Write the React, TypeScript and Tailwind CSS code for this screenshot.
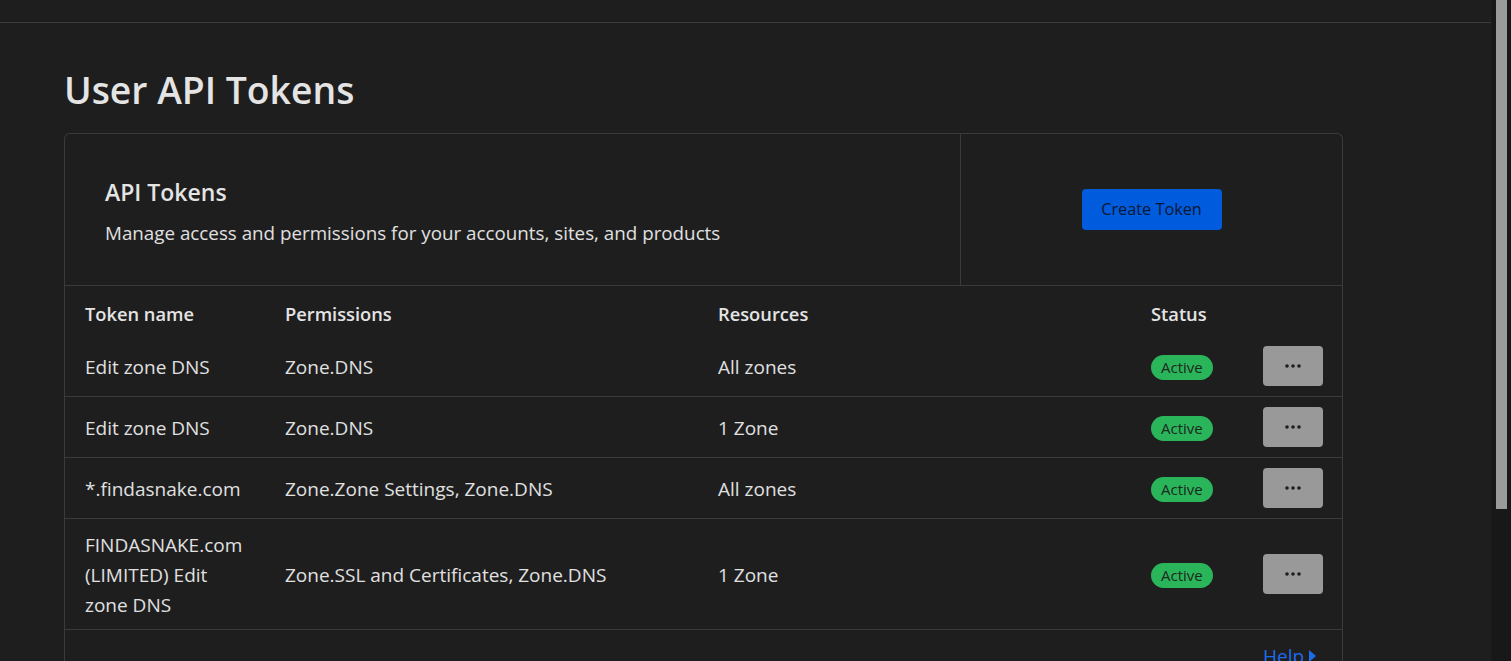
import React from "react";

const rows = [
  { name: "Edit zone DNS", perms: "Zone.DNS", res: "All zones" },
  { name: "Edit zone DNS", perms: "Zone.DNS", res: "1 Zone" },
  { name: "*.findasnake.com", perms: "Zone.Zone Settings, Zone.DNS", res: "All zones" },
  { name: "FINDASNAKE.com (LIMITED) Edit zone DNS", perms: "Zone.SSL and Certificates, Zone.DNS", res: "1 Zone" },
];

function Dots() {
  return (
    <svg width="16" height="4" viewBox="0 0 16 4" fill="#1e1e1e">
      <circle cx="2" cy="2" r="1.8" />
      <circle cx="8" cy="2" r="1.8" />
      <circle cx="14" cy="2" r="1.8" />
    </svg>
  );
}

export default function App() {
  return (
    <div
      className="flex h-[661px] w-[1511px] overflow-hidden bg-[#1e1e1e] text-[#e0e0e0]"
      style={{ fontFamily: '"Open Sans", "Noto Sans", sans-serif' }}
    >
      <div className="flex-1 flex flex-col">
        <div className="h-[23px] shrink-0 border-b border-[#3a3a3a]" />
        <div className="pl-[64px] pr-[148px]">
          <h1 className="mt-[42px] text-[37.3px] leading-[50px] font-semibold text-[#e4e4e4]">User API Tokens</h1>
          <div className="mt-[18px] rounded-t-[6px] border border-b-0 border-[#3a3a3a]">
            <div className="flex h-[152px] border-b border-[#3a3a3a]">
              <div className="flex-1 flex flex-col pl-[40px] pt-[43px]">
                <div className="text-[23px] leading-[30px] font-semibold text-[#e4e4e4]">API Tokens</div>
                <div className="mt-[13px] text-[18.8px] leading-[26px]">
                  Manage access and permissions for your accounts, sites, and products
                </div>
              </div>
              <div className="w-[382px] border-l border-[#3a3a3a] flex items-center justify-center">
                <button className="h-[41px] w-[140px] rounded-[4px] bg-[#005bdd] text-[16.3px] text-[#0a1833]">
                  Create Token
                </button>
              </div>
            </div>
            <div className="grid grid-cols-[200px_433px_433px_112px_99px] h-[50px] items-start pt-[13px] text-[18.3px] leading-[30px] font-semibold text-[#e4e4e4]">
              <div className="pl-[20px]">Token name</div>
              <div className="pl-[20px]">Permissions</div>
              <div className="pl-[20px]">Resources</div>
              <div className="pl-[20px]">Status</div>
              <div />
            </div>
            {rows.map((r, i) => (
              <div
                key={i}
                className="grid grid-cols-[200px_433px_433px_112px_99px] items-center py-[10px] border-b border-[#3a3a3a] text-[19px] leading-[30px]"
              >
                <div className="px-[20px] translate-y-[1px]">{r.name}</div>
                <div className="px-[20px] translate-y-[1px]">{r.perms}</div>
                <div className="px-[20px] translate-y-[1px]">{r.res}</div>
                <div className="pl-[20px]">
                  <span className="inline-flex h-[25px] items-center rounded-full bg-[#2bb55a] px-[10px] text-[15px] text-[#1a2a1e]">
                    Active
                  </span>
                </div>
                <div className="pl-[20px]">
                  <button className="flex h-[40px] w-[60px] items-center justify-center rounded-[4px] bg-[#999999]">
                    <Dots />
                  </button>
                </div>
              </div>
            ))}
            <div className="h-[40px] flex pl-[1198px] pt-[12px]">
              <a className="flex items-center gap-[4px] text-[19px] leading-[28px] text-[#1d6cf0]">
                Help
                <svg width="9" height="14" viewBox="0 0 9 14" fill="#1d6cf0">
                  <path d="M1 1 L8 7 L1 13 Z" />
                </svg>
              </a>
            </div>
          </div>
        </div>
      </div>
      <div className="w-[20px] shrink-0 bg-[#181818] border-l border-[#1a1a1a] relative">
        <div className="absolute left-[4px] top-0 h-[509px] w-[11px] bg-[#9a9a9a]" />
      </div>
    </div>
  );
}
